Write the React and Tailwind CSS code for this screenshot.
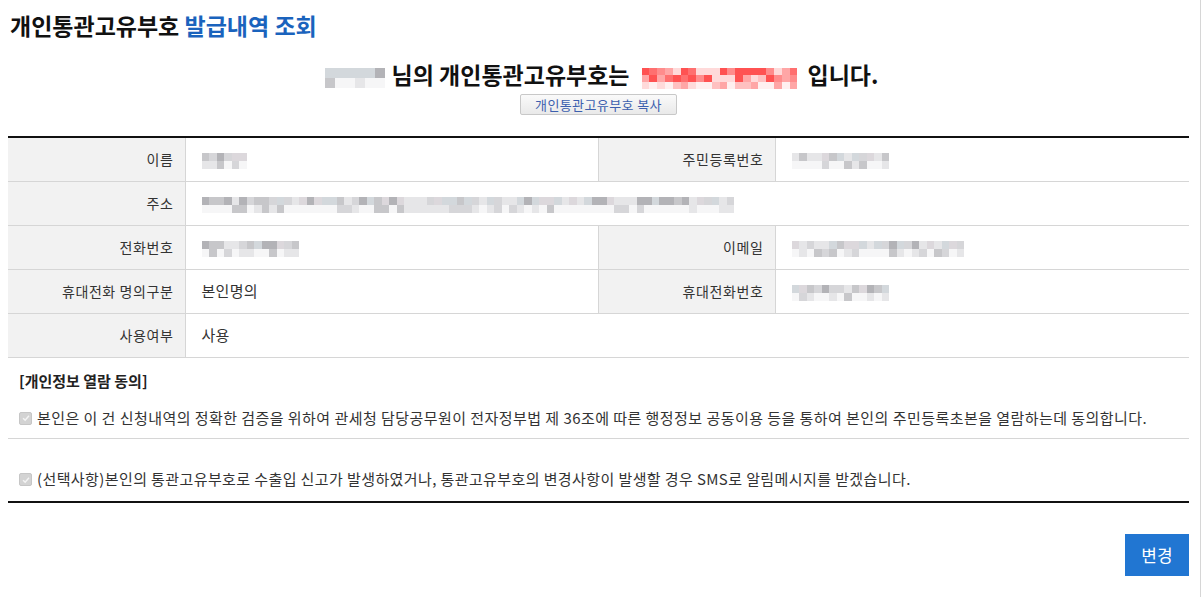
import React from 'react';

const font = { fontFamily: '"Noto Sans CJK KR", "Noto Sans", sans-serif' };

const gray = ['bg-[#f6f6f7]', 'bg-[#e6e6e8]', 'bg-[#d6d6d9]', 'bg-[#c7c7ca]', 'bg-[#b3b3b7]', 'bg-[#dcd8dc]', 'bg-[#d3d8dc]'];
const red = ['bg-[#fff0f0]', 'bg-[#ffdada]', 'bg-[#ffc0c0]', 'bg-[#ffa6a6]', 'bg-[#ff8c8c]', 'bg-[#ff6f6f]', 'bg-[#ff5252]'];

// pseudo-random but stable block pattern
const pattern = (cols, rows, seed, bottomFade = true) =>
  Array.from({ length: rows }, (_, r) =>
    Array.from({ length: cols }, (_, c) => {
      const v = Math.abs(Math.sin((c + 1) * 12.9898 + (r + 1) * 78.233 + seed) * 43758.5453) % 1;
      let idx = Math.floor(v * 6) + 1;
      if (bottomFade && r === rows - 1) idx = Math.max(0, idx - 3);
      return idx;
    })
  );

const Mosaic = ({ cols, rows = 2, seed = 1, palette = gray, cell = 'w-[7.5px] h-[8px]' }) => (
  <span className="inline-flex flex-col align-middle">
    {pattern(cols, rows, seed).map((row, i) => (
      <span key={i} className="flex">
        {row.map((p, j) => (
          <span key={j} className={`${cell} ${palette[p]}`}></span>
        ))}
      </span>
    ))}
  </span>
);

const CheckBox = () => (
  <span className="inline-flex items-center justify-center w-[13px] h-[13px] rounded-[2px] bg-[#d3d3d3] border border-[#c6c6c6] mr-[5px] shrink-0">
    <svg viewBox="0 0 12 12" className="w-[10px] h-[10px]">
      <path d="M2.5 6.2 L5 8.6 L9.6 3.4" fill="none" stroke="#f4f4f4" strokeWidth="1.8" />
    </svg>
  </span>
);

const Label = ({ children }) => (
  <td className="bg-[#f2f2f2] text-right pr-[11px] text-[14px] tracking-[0.6px] text-[#333] border-b border-r border-[#d6d6d6] h-[44px]">
    {children}
  </td>
);

const Value = ({ children, span }) => (
  <td colSpan={span} className="pl-[16px] text-[15px] tracking-[0.3px] text-[#333] border-b border-r border-[#d6d6d6] last:border-r-0 h-[44px]">
    {children}
  </td>
);

export default function App() {
  return (
    <div className="bg-white min-h-[597px] w-[1201px] border-r border-[#d6d6d6] text-[#333]" style={font}>
      <div className="pl-[10px] pt-[9px] h-[50px]">
        <h1 className="text-[23px] font-bold leading-[32px] text-[#111]">
          개인통관고유부호 <span className="text-[#1a63bd]">발급내역 조회</span>
        </h1>
      </div>
      <div className="ml-[8px] w-[1181px]">
        <div className="flex items-center justify-center h-[36px] mt-[6px] text-[23px] font-bold text-[#111] leading-[30px]">
          <span className="mr-[7px] mt-[1px] ml-[6px]">
            <Mosaic cols={6} rows={2} seed={3} cell="w-[10px] h-[10px]" />
          </span>
          <span>님의 개인통관고유부호는</span>
          <span className="ml-[12px] mr-[10px] mt-[1px]">
            <Mosaic cols={20} rows={3} seed={7} palette={red} cell="w-[7.8px] h-[7px]" />
          </span>
          <span>입니다.</span>
        </div>
        <div className="flex justify-center mt-[2px]">
          <button className="w-[157px] h-[21px] border border-[#c8c8c8] rounded-[2px] bg-gradient-to-b from-[#fafafa] to-[#e9e9e9] text-[13px] tracking-[0.4px] leading-[19px] text-[#3c5fae]">
            개인통관고유부호 복사
          </button>
        </div>

        <table className="w-full table-fixed mt-[21px] border-t-2 border-[#111] border-collapse">
          <colgroup>
            <col className="w-[177px]" />
            <col className="w-[413px]" />
            <col className="w-[177px]" />
            <col />
          </colgroup>
          <tbody>
            <tr>
              <Label>이름</Label>
              <Value>
                <Mosaic cols={6} seed={11} />
              </Value>
              <Label>주민등록번호</Label>
              <Value>
                <Mosaic cols={13} seed={13} />
              </Value>
            </tr>
            <tr>
              <Label>주소</Label>
              <Value span={3}>
                <Mosaic cols={71} seed={17} />
              </Value>
            </tr>
            <tr>
              <Label>전화번호</Label>
              <Value>
                <Mosaic cols={13} seed={19} />
              </Value>
              <Label>이메일</Label>
              <Value>
                <Mosaic cols={23} seed={23} />
              </Value>
            </tr>
            <tr>
              <Label>휴대전화 명의구분</Label>
              <Value>본인명의</Value>
              <Label>휴대전화번호</Label>
              <Value>
                <Mosaic cols={13} seed={29} />
              </Value>
            </tr>
            <tr>
              <Label>사용여부</Label>
              <Value span={3}>사용</Value>
            </tr>
          </tbody>
        </table>

        <div className="border-b-2 border-[#111]">
          <p className="pl-[11px] pt-[13px] text-[15px] font-bold leading-[20px] text-[#222]">[개인정보 열람 동의]</p>
          <div className="flex items-center pl-[11px] pt-[8px] h-[48px] border-b border-[#d6d6d6] text-[15px] tracking-[0.45px] text-[#333]">
            <CheckBox />
            본인은 이 건 신청내역의 정확한 검증을 위하여 관세청 담당공무원이 전자정부법 제 36조에 따른 행정정보 공동이용 등을 통하여 본인의 주민등록초본을 열람하는데 동의합니다.
          </div>
          <div className="flex items-center pl-[11px] pt-[20px] h-[62px] text-[15px] tracking-[0.4px] text-[#333]">
            <CheckBox />
            (선택사항)본인의 통관고유부호로 수출입 신고가 발생하였거나, 통관고유부호의 변경사항이 발생할 경우 SMS로 알림메시지를 받겠습니다.
          </div>
        </div>

        <div className="flex justify-end mt-[31px]">
          <button className="w-[64px] h-[42px] bg-[#2176d2] text-white text-[17px]">변경</button>
        </div>
      </div>
    </div>
  );
}
